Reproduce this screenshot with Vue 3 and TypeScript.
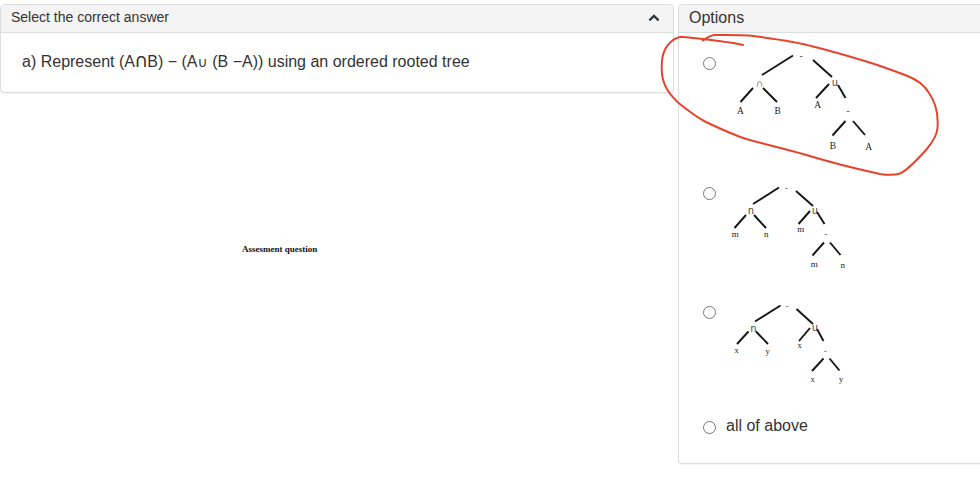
<script setup lang="ts">
import { ref } from 'vue'

interface Label { x: number; y: number; text: string; kind?: 'op' | 'dash' }
interface TreeOption { id: string; top: number; height: number; size: number; lines: number[][]; labels: Label[] }

const selected = ref('')

const options: TreeOption[] = [
  {
    id: 'ab', top: 50, height: 130, size: 9.5,
    lines: [
      [762, 75, 793, 55.5], [813, 60, 832, 77], [753, 88, 740.5, 102], [763, 88, 777, 102],
      [829, 84, 816, 98], [838, 85, 845.5, 98], [845.5, 121, 832.5, 135.5], [853, 121, 865, 135],
    ],
    labels: [
      { x: 801, y: 59, text: '-', kind: 'dash' }, { x: 759.5, y: 86.5, text: '∩', kind: 'op' },
      { x: 835, y: 85.5, text: 'u', kind: 'op' }, { x: 740.5, y: 114, text: 'A' },
      { x: 777.7, y: 114, text: 'B' }, { x: 817.7, y: 107.5, text: 'A' },
      { x: 848, y: 114, text: '-', kind: 'dash' }, { x: 833, y: 149, text: 'B' }, { x: 868.7, y: 150, text: 'A' },
    ],
  },
  {
    id: 'mn', top: 180, height: 119, size: 9,
    lines: [
      [753, 204, 779, 187.5], [796, 191, 813, 206], [746, 215, 734.5, 228], [754, 215, 766, 228],
      [810, 211, 798.5, 224], [817, 212, 824.5, 224], [824, 242.5, 812.5, 255.5], [830, 242.5, 840.5, 255],
    ],
    labels: [
      { x: 786.5, y: 191, text: '-', kind: 'dash' }, { x: 751, y: 214, text: 'n', kind: 'op' },
      { x: 815, y: 213.5, text: 'u', kind: 'op' }, { x: 735.3, y: 237, text: 'm' },
      { x: 766.2, y: 237, text: 'n' }, { x: 800.8, y: 232, text: 'm' },
      { x: 826, y: 237, text: '-', kind: 'dash' }, { x: 814.2, y: 267, text: 'm' }, { x: 842.7, y: 267.5, text: 'n' },
    ],
  },
  {
    id: 'xy', top: 299, height: 115, size: 8.5,
    lines: [
      [755, 321.5, 780.5, 305.5], [796.5, 309, 813, 324], [748.5, 331.5, 737, 344], [756, 331.5, 768, 344],
      [810, 328, 799, 341], [817, 329, 823.5, 341], [823.5, 358.5, 812, 371], [829.5, 358.5, 839.5, 370.5],
    ],
    labels: [
      { x: 787.2, y: 309, text: '-', kind: 'dash' }, { x: 753.3, y: 331.5, text: 'n', kind: 'op' },
      { x: 815, y: 331, text: 'u', kind: 'op' }, { x: 736.7, y: 353, text: 'x' },
      { x: 767.5, y: 353.5, text: 'y' }, { x: 799.7, y: 348, text: 'x' },
      { x: 825.5, y: 354, text: '-', kind: 'dash' }, { x: 812.7, y: 381.5, text: 'x' }, { x: 841.2, y: 382, text: 'y' },
    ],
  },
]
</script>

<template>
  <main class="page">
    <div class="left">
      <section class="panel">
        <header class="head question-head">
          <span>Select the correct answer</span>
          <svg class="chevron" viewBox="0 0 12 8"><path d="M1.4 6.4 L6 1.9 L10.6 6.4" /></svg>
        </header>
        <p class="question">a) Represent (A<span class="cap">∩</span>B) − (A<span class="cup">∪</span> (B −A)) using an ordered rooted tree</p>
      </section>
      <p class="caption">Assesment question</p>
    </div>

    <section class="panel options">
      <header class="head options-head">Options</header>
      <div class="list">
        <label v-for="o in options" :key="o.id" class="option">
          <input v-model="selected" type="radio" name="answer" :value="o.id">
          <svg class="tree" width="180" :height="o.height" :viewBox="`726 ${o.top} 180 ${o.height}`">
            <line v-for="(l, i) in o.lines" :key="i" :x1="l[0]" :y1="l[1]" :x2="l[2]" :y2="l[3]" />
            <text v-for="(t, i) in o.labels" :key="i" :x="t.x" :y="t.y" :class="t.kind" :font-size="t.kind === 'op' ? 10.5 : o.size">{{ t.text }}</text>
          </svg>
        </label>
        <label class="option">
          <input v-model="selected" type="radio" name="answer" value="all">
          <span class="text">all of above</span>
        </label>
      </div>
    </section>

    <svg class="marker" viewBox="0 0 980 497">
      <path d="M743 45 C725 41 703 39 681 36.8 C670 39 663 49 662 61 C660 82 667 92 678 102.5 C686 109 696 117 706 122 C721 129 735 136 750 140 C768 145 785 149 803 154 C829 162 857 169 880 174 C888 175.200 895 175.200 900 173.500 C908 170 917 160 926 150 C932 143 937 136 937.500 128 C938.500 115 936 103 929 93 C924 84 916 79 905 75 C893 70.500 881 66 868 62 C850 56.500 831 51 813 46.500 C794 41 771 38.500 749 35.500 C735 34.500 721 35 714 35 C709 35.500 707 38 703 40.500" />
    </svg>
  </main>
</template>

<style>
body { background: #fff; overflow: hidden; }
</style>

<style scoped>
.page {
  position: relative;
  box-sizing: border-box;
  display: flex;
  align-items: flex-start;
  gap: 4px;
  width: 984px;
  height: 497px;
  padding-top: 4px;
  font-family: "Liberation Sans", Arial, sans-serif;
  font-size: 16px;
  color: #333;
}
.left { width: 674px; flex: none; }
.panel {
  box-sizing: border-box;
  border: 1px solid #ddd;
  border-radius: 4px;
  background: #fff;
  box-shadow: 0 1px 1px rgba(0, 0, 0, .05);
}
.left .panel { height: 89px; }
.head {
  box-sizing: border-box;
  height: 28px;
  border-bottom: 1px solid #ddd;
  border-radius: 3px 3px 0 0;
  background: #f4f4f4;
  padding: 0 10px;
  line-height: 25px;
}
.question-head {
  display: flex;
  justify-content: space-between;
  align-items: flex-start;
  font-size: 14px;
}
.chevron { width: 12px; height: 8px; margin: 9px 3px 0 0; }
.chevron path { fill: none; stroke: #2c3942; stroke-width: 2.3; }
.question { margin: 0; padding: 18px 0 0 21px; line-height: 22px; white-space: nowrap; }
.cap, .cup { font-family: "DejaVu Sans", sans-serif; line-height: 1; }
.cap { margin: 0 -0.8px; font-size: 19px; line-height: 0; }
.cup { font-size: 14px; }
.caption {
  margin: 151px 0 0 242px;
  font: bold 9px/11px "Liberation Serif", serif;
  color: #111;
}
.options { width: 306px; height: 460px; flex: none; }
.list { padding: 17px 0 0 24px; }
.option { display: flex; align-items: flex-start; gap: 10px; }
.option input {
  appearance: none;
  box-sizing: border-box;
  width: 13px;
  height: 13px;
  margin: 7px 0 0;
  border: 1px solid #767676;
  border-radius: 50%;
  background: #fff;
  flex: none;
}
.tree { display: block; }
.tree line { stroke: #151515; stroke-width: 1.9; }
.tree text { font-family: "Liberation Serif", serif; fill: #222; text-anchor: middle; }
.tree .op { font-family: "Liberation Sans", sans-serif; fill: #444; }
.tree .dash { fill: #444; }
.text { padding-top: 1px; line-height: 22px; }
.marker {
  position: absolute;
  left: 0;
  top: 0;
  width: 980px;
  height: 497px;
  pointer-events: none;
}
.marker path { fill: none; stroke: #e6432a; stroke-width: 2; stroke-linecap: round; stroke-linejoin: round; }
</style>
